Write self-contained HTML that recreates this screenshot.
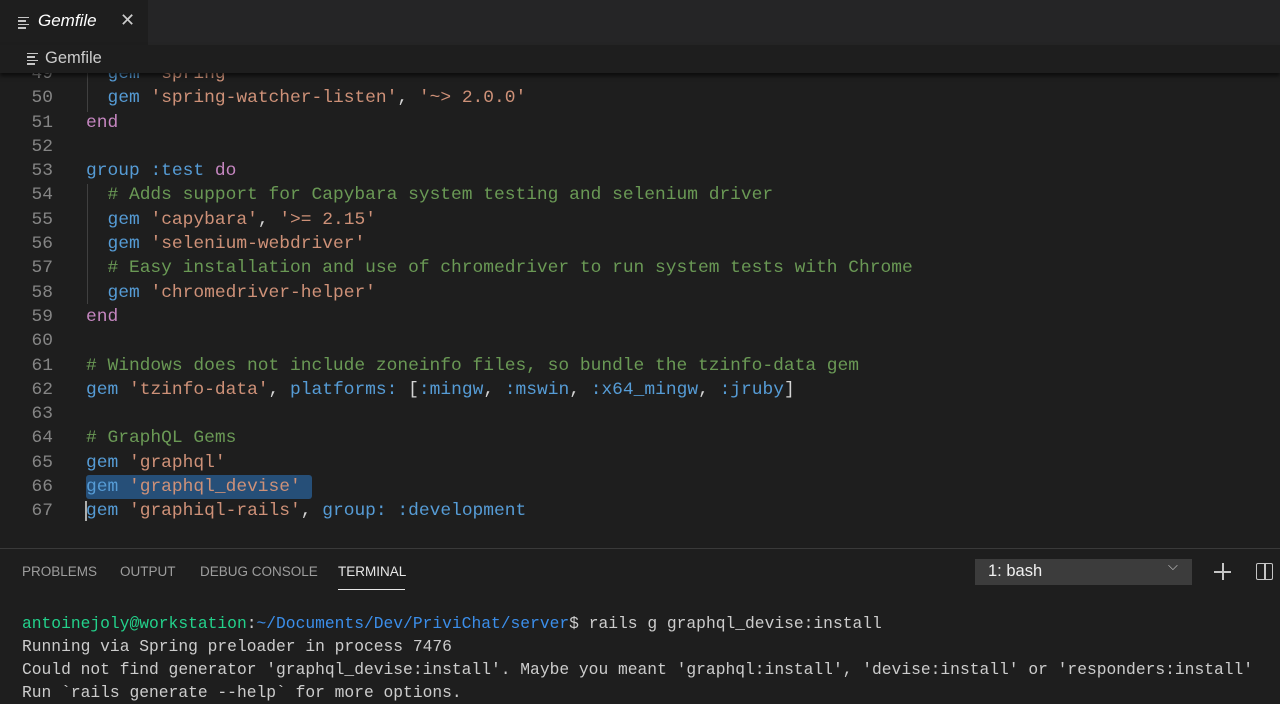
<!DOCTYPE html>
<html><head><meta charset="utf-8"><style>
*{margin:0;padding:0;box-sizing:border-box}
body{width:1280px;height:702px;background:#1e1e1e;overflow:hidden;position:relative;font-family:"Liberation Sans",sans-serif}
.tabs{position:absolute;left:0;top:0;width:1280px;height:45px;background:#252526}
.tab{position:absolute;left:0;top:0;width:148px;height:45px;background:#1e1e1e;color:#fff;font-style:italic;font-size:17px}
.tab .t{position:absolute;left:38px;top:11px}
.tab .x{position:absolute;left:120px;top:10px;font-style:normal;font-size:18px;color:#ccc}
.ico{position:absolute;width:11px}
.ico i{display:block;height:1.4px;background:#c5c5c5;margin-bottom:2px}
.bc{position:absolute;left:0;top:45px;width:1280px;height:28px;background:#1e1e1e;color:#ccc;font-size:16.5px;box-shadow:0 3px 4px rgba(0,0,0,.6);z-index:2}
.bc .t{position:absolute;left:45px;top:4px}
.code{position:absolute;left:0;top:62px;width:1280px;height:486px;overflow:hidden;font-family:"Liberation Mono",monospace;font-size:17.9px}
.ln{height:24.3px;line-height:24.3px;white-space:pre;position:relative}
.ln .n{position:absolute;left:0;width:53px;text-align:right;color:#858585}
.ln .c{position:absolute;left:86px;color:#d4d4d4}
.k{color:#569cd6}.s{color:#ce9178}.m{color:#6a9955}.p{color:#c586c0}
.sel{background:#264f78;border-radius:3px}
.guide{position:absolute;left:86px;width:1px;background:#404040}
.panel{position:absolute;left:0;top:548px;width:1280px;height:154px;background:#1e1e1e;border-top:1px solid #3a3a3a}
.pt{position:absolute;top:15px;font-size:13.5px;color:#9d9d9d}
.term{position:absolute;left:22px;top:63px;font-family:"Liberation Mono",monospace;font-size:16.3px;color:#ccc;line-height:23px;white-space:pre}
</style></head><body>
<div class="tabs"><div class="tab">
<div class="ico" style="left:18px;top:17px"><i></i><i style="width:8px"></i><i></i><i style="width:8px"></i></div>
<span class="t">Gemfile</span><span class="x">✕</span></div></div>
<div class="bc"><div class="ico" style="left:27px;top:8px"><i></i><i style="width:8px"></i><i></i><i style="width:8px"></i></div><span class="t">Gemfile</span></div>
<div class="code">
<div class="guide" style="top:0;height:50px;left:87px"></div>
<div class="guide" style="top:122px;height:120px;left:87px"></div>
<div class="ln"><span class="n">49</span><span class="c">  <span class="k">gem</span> <span class="s">'spring'</span></span></div>
<div class="ln"><span class="n">50</span><span class="c">  <span class="k">gem</span> <span class="s">'spring-watcher-listen'</span>, <span class="s">'~&gt; 2.0.0'</span></span></div>
<div class="ln"><span class="n">51</span><span class="c"><span class="p">end</span></span></div>
<div class="ln"><span class="n">52</span></div>
<div class="ln"><span class="n">53</span><span class="c"><span class="k">group</span> <span class="k">:test</span> <span class="p">do</span></span></div>
<div class="ln"><span class="n">54</span><span class="c">  <span class="m"># Adds support for Capybara system testing and selenium driver</span></span></div>
<div class="ln"><span class="n">55</span><span class="c">  <span class="k">gem</span> <span class="s">'capybara'</span>, <span class="s">'&gt;= 2.15'</span></span></div>
<div class="ln"><span class="n">56</span><span class="c">  <span class="k">gem</span> <span class="s">'selenium-webdriver'</span></span></div>
<div class="ln"><span class="n">57</span><span class="c">  <span class="m"># Easy installation and use of chromedriver to run system tests with Chrome</span></span></div>
<div class="ln"><span class="n">58</span><span class="c">  <span class="k">gem</span> <span class="s">'chromedriver-helper'</span></span></div>
<div class="ln"><span class="n">59</span><span class="c"><span class="p">end</span></span></div>
<div class="ln"><span class="n">60</span></div>
<div class="ln"><span class="n">61</span><span class="c"><span class="m"># Windows does not include zoneinfo files, so bundle the tzinfo-data gem</span></span></div>
<div class="ln"><span class="n">62</span><span class="c"><span class="k">gem</span> <span class="s">'tzinfo-data'</span>, <span class="k">platforms:</span> [<span class="k">:mingw</span>, <span class="k">:mswin</span>, <span class="k">:x64_mingw</span>, <span class="k">:jruby</span>]</span></div>
<div class="ln"><span class="n">63</span></div>
<div class="ln"><span class="n">64</span><span class="c"><span class="m"># GraphQL Gems</span></span></div>
<div class="ln"><span class="n">65</span><span class="c"><span class="k">gem</span> <span class="s">'graphql'</span></span></div>
<div class="ln"><span class="n">66</span><span class="c sel"><span class="k">gem</span> <span class="s">'graphql_devise'</span> </span></div>
<div class="ln"><span class="n">67</span><span class="c"><span class="k">gem</span> <span class="s">'graphiql-rails'</span>, <span class="k">group:</span> <span class="k">:development</span></span><span style="position:absolute;left:85px;top:2px;width:2px;height:20px;background:#aeafad"></span></div>
</div>
<div class="panel">
<span class="pt" style="left:22px">PROBLEMS</span>
<span class="pt" style="left:120px">OUTPUT</span>
<span class="pt" style="left:200px">DEBUG CONSOLE</span>
<span class="pt" style="left:338px;color:#e7e7e7">TERMINAL</span>
<div style="position:absolute;left:338px;top:40px;width:67px;height:1px;background:#e7e7e7"></div>
<div style="position:absolute;left:975px;top:10px;width:217px;height:26px;background:#3c3c3c;color:#f0f0f0;font-size:16.5px;padding:3px 0 0 13px">1: bash<span style="position:absolute;left:193px;top:-1px;font-size:13px;color:#ccc">⌵</span></div>
<div style="position:absolute;left:1214px;top:22px;width:17px;height:1.5px;background:#c5c5c5"></div>
<div style="position:absolute;left:1222px;top:14px;width:1.5px;height:17px;background:#c5c5c5"></div>
<div style="position:absolute;left:1256px;top:14px;width:17px;height:17px;border:1.5px solid #c5c5c5;border-radius:2px"></div>
<div style="position:absolute;left:1264px;top:14px;width:1.5px;height:17px;background:#c5c5c5"></div>
<div class="term"><span style="color:#23d18b">antoinejoly@workstation</span>:<span style="color:#3b8eea">~/Documents/Dev/PriviChat/server</span>$ rails g graphql_devise:install
Running via Spring preloader in process 7476
Could not find generator 'graphql_devise:install'. Maybe you meant 'graphql:install', 'devise:install' or 'responders:install'
Run `rails generate --help` for more options.</div>
</div>
</body></html>
